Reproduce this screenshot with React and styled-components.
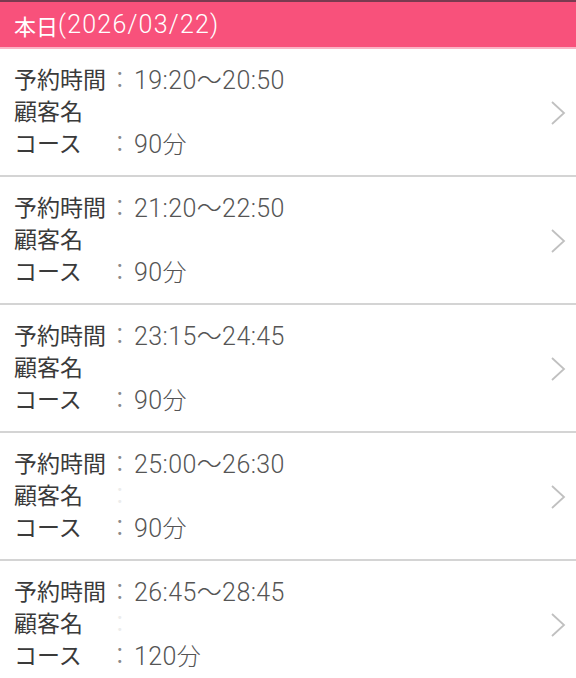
import styled, { createGlobalStyle } from "styled-components";

const GlobalStyle = createGlobalStyle`
  body {
    margin: 0;
    background: #ffffff;
    font-family: Roboto, "Noto Sans CJK JP", sans-serif;
  }
`;

const Page = styled.div`
  width: 100%;
  min-height: 100vh;
  background: #ffffff;
`;

const Header = styled.div`
  height: 49px;
  box-sizing: border-box;
  border-top: 2px solid #7a3a50;
  border-bottom: 2px solid #fbb3c5;
  background: #f8517b;
  color: #ffffff;
  font-size: 22px;
  display: flex;
  align-items: center;
  padding-left: 14px;
`;

// latin glyphs on the device render larger than the CJK ones
const Num = styled.span`
  font-size: ${(props) => props.size || 25}px;
  font-weight: 300;
  letter-spacing: ${(props) => props.spacing || 0}px;
`;

const Item = styled.div`
  display: flex;
  align-items: center;
  justify-content: space-between;
  padding: 16px 10px 14px 14px;
  border-bottom: 2px solid #d4d4d4;
`;

const Info = styled.div`
  display: grid;
  grid-template-columns: 92px auto;
  grid-auto-rows: 32px;
  font-size: 23px;
  line-height: 32px;
`;

const Label = styled.div`
  color: #3a3a3a;
  white-space: nowrap;
`;

const Value = styled.div`
  display: flex;
  align-items: center;
  height: 32px;
  color: #555555;
  white-space: nowrap;
  font-size: 25px;
  font-weight: 300;
  letter-spacing: 0.4px;
`;

const Colon = styled.span`
  display: inline-block;
  width: 28px;
  text-align: center;
  font-size: 23px;
  color: ${(props) => (props.faint ? "#ececec" : "#8a8a8a")};
`;

const Unit = styled.span`
  font-size: 24px;
`;

const Chevron = () => (
  <svg width="16" height="26" viewBox="0 0 16 26">
    <polyline points="2,2 14,13 2,24" fill="none" stroke="#c0c0c0" strokeWidth="1.8" />
  </svg>
);

const reservations = [
  { time: "19:20～20:50", course: "90" },
  { time: "21:20～22:50", course: "90" },
  { time: "23:15～24:45", course: "90" },
  { time: "25:00～26:30", course: "90", faint: true },
  { time: "26:45～28:45", course: "120", faint: true },
];

const App = () => {
  return (
    <Page>
      <GlobalStyle />
      <Header>
        本日<Num size={25} spacing={1.2}>(2026/03/22)</Num>
      </Header>
      {reservations.map((r, i) => (
        <Item key={i}>
          <Info>
            <Label>予約時間</Label>
            <Value>
              <Colon>：</Colon>
              {r.time}
            </Value>
            <Label>顧客名</Label>
            <Value>{r.faint && <Colon faint>：</Colon>}</Value>
            <Label>コース</Label>
            <Value>
              <Colon>：</Colon>
              {r.course}
              <Unit>分</Unit>
            </Value>
          </Info>
          <Chevron />
        </Item>
      ))}
    </Page>
  );
};

export default App;
